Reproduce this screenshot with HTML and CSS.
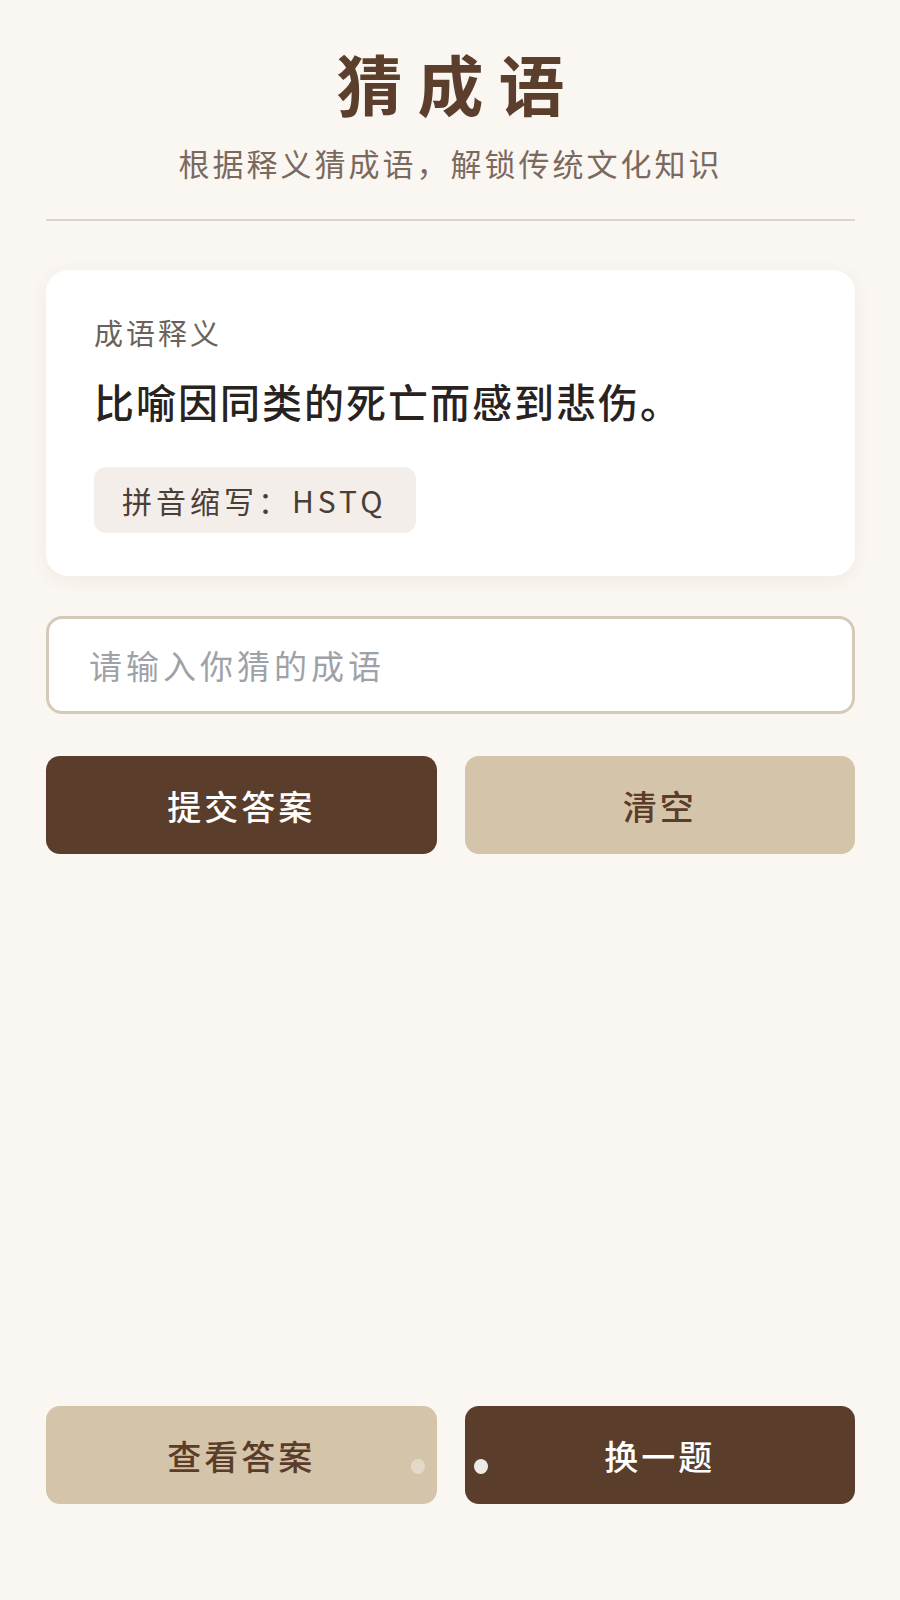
FILE: index.html
```html
<!DOCTYPE html>
<html lang="zh-CN">
<head>
  <meta charset="utf-8" />
  <title>猜成语</title>
  <meta name="viewport" content="width=device-width, initial-scale=1.0">
  <link rel="stylesheet" href="styles.css">
</head>
<body>

  <main class="page">

    <header class="page-header">
      <h1 class="title">猜成语</h1>
      <p class="subtitle">根据释义猜成语，解锁传统文化知识</p>
    </header>

    <section class="card">
      <div class="card-label">成语释义</div>
      <div class="card-meaning">比喻因同类的死亡而感到悲伤。</div>
      <div class="hint">拼音缩写：HSTQ</div>
    </section>

    <input class="answer-input" type="text" placeholder="请输入你猜的成语" />

    <div class="btn-row">
      <button class="btn btn-dark">提交答案</button>
      <button class="btn btn-light">清空</button>
    </div>

    <div class="btn-row bottom-row">
      <button class="btn btn-light">查看答案<span class="dot dot-right"></span></button>
      <button class="btn btn-dark">换一题<span class="dot dot-left"></span></button>
    </div>

  </main>

</body>
</html>
```

FILE: styles.css
```css
html, body {
  margin: 0;
  padding: 0;
  background: #faf6f1;
}

body {
  font-family: "Noto Sans CJK SC", "Noto Sans", sans-serif;
  color: #2b2521;
}

.page {
  box-sizing: border-box;
  min-height: 1600px;
  padding: 0 45px 96px 46px;
  display: flex;
  flex-direction: column;
}

.page-header {
  padding-top: 50px;
  padding-bottom: 38px;
  border-bottom: 2px solid #dcd5cb;
  text-align: center;
}

.title {
  margin: 0;
  font-size: 66px;
  line-height: 64px;
  font-weight: 700;
  letter-spacing: 15px;
  text-indent: 15px;
  color: #5b3e2c;
}

.subtitle {
  margin: 31px 0 0 0;
  font-size: 31px;
  line-height: 36px;
  letter-spacing: 3px;
  color: #7a6a5e;
}

.card {
  margin-top: 49px;
  background: #fff;
  border-radius: 22px;
  padding: 44px 48px 43px 48px;
  box-shadow: 0 4px 18px rgba(120, 90, 60, 0.07);
}

.card-label {
  font-size: 29px;
  line-height: 36px;
  letter-spacing: 3px;
  color: #6b625b;
}

.card-meaning {
  margin-top: 27px;
  font-size: 40px;
  line-height: 48px;
  font-weight: 500;
  letter-spacing: 2px;
  color: #29231f;
}

.hint {
  display: inline-block;
  margin-top: 42px;
  padding: 16px 30px 16px 28px;
  font-size: 30px;
  line-height: 34px;
  letter-spacing: 4px;
  word-spacing: 2px;
  color: #4a3f38;
  background: #f4eeea;
  border-radius: 12px;
}

.answer-input {
  box-sizing: border-box;
  margin-top: 40px;
  width: 100%;
  height: 98px;
  padding: 0 40px;
  font-family: inherit;
  font-size: 33px;
  letter-spacing: 4px;
  color: #2b2521;
  background: #fff;
  border: 3px solid #d3cab7;
  border-radius: 16px;
  outline: none;
}

.answer-input::placeholder {
  color: #9ea2a8;
}

.btn-row {
  margin-top: 42px;
  display: flex;
  gap: 28px;
}

.bottom-row {
  margin-top: auto;
}

.btn {
  position: relative;
  flex: 1;
  height: 98px;
  border: none;
  border-radius: 14px;
  font-family: inherit;
  font-size: 34px;
  font-weight: 500;
  letter-spacing: 3px;
  cursor: pointer;
}

.btn-dark {
  background: #5b3d2b;
  color: #fff;
}

.btn-light {
  background: #d4c4aa;
  color: #5a3c29;
}

.dot {
  position: absolute;
  top: 53px;
  width: 14px;
  height: 15px;
  border-radius: 50%;
}

.dot-right {
  right: 12px;
  background: #e4d9c8;
}

.dot-left {
  left: 9px;
  background: #eeeae6;
}
```
